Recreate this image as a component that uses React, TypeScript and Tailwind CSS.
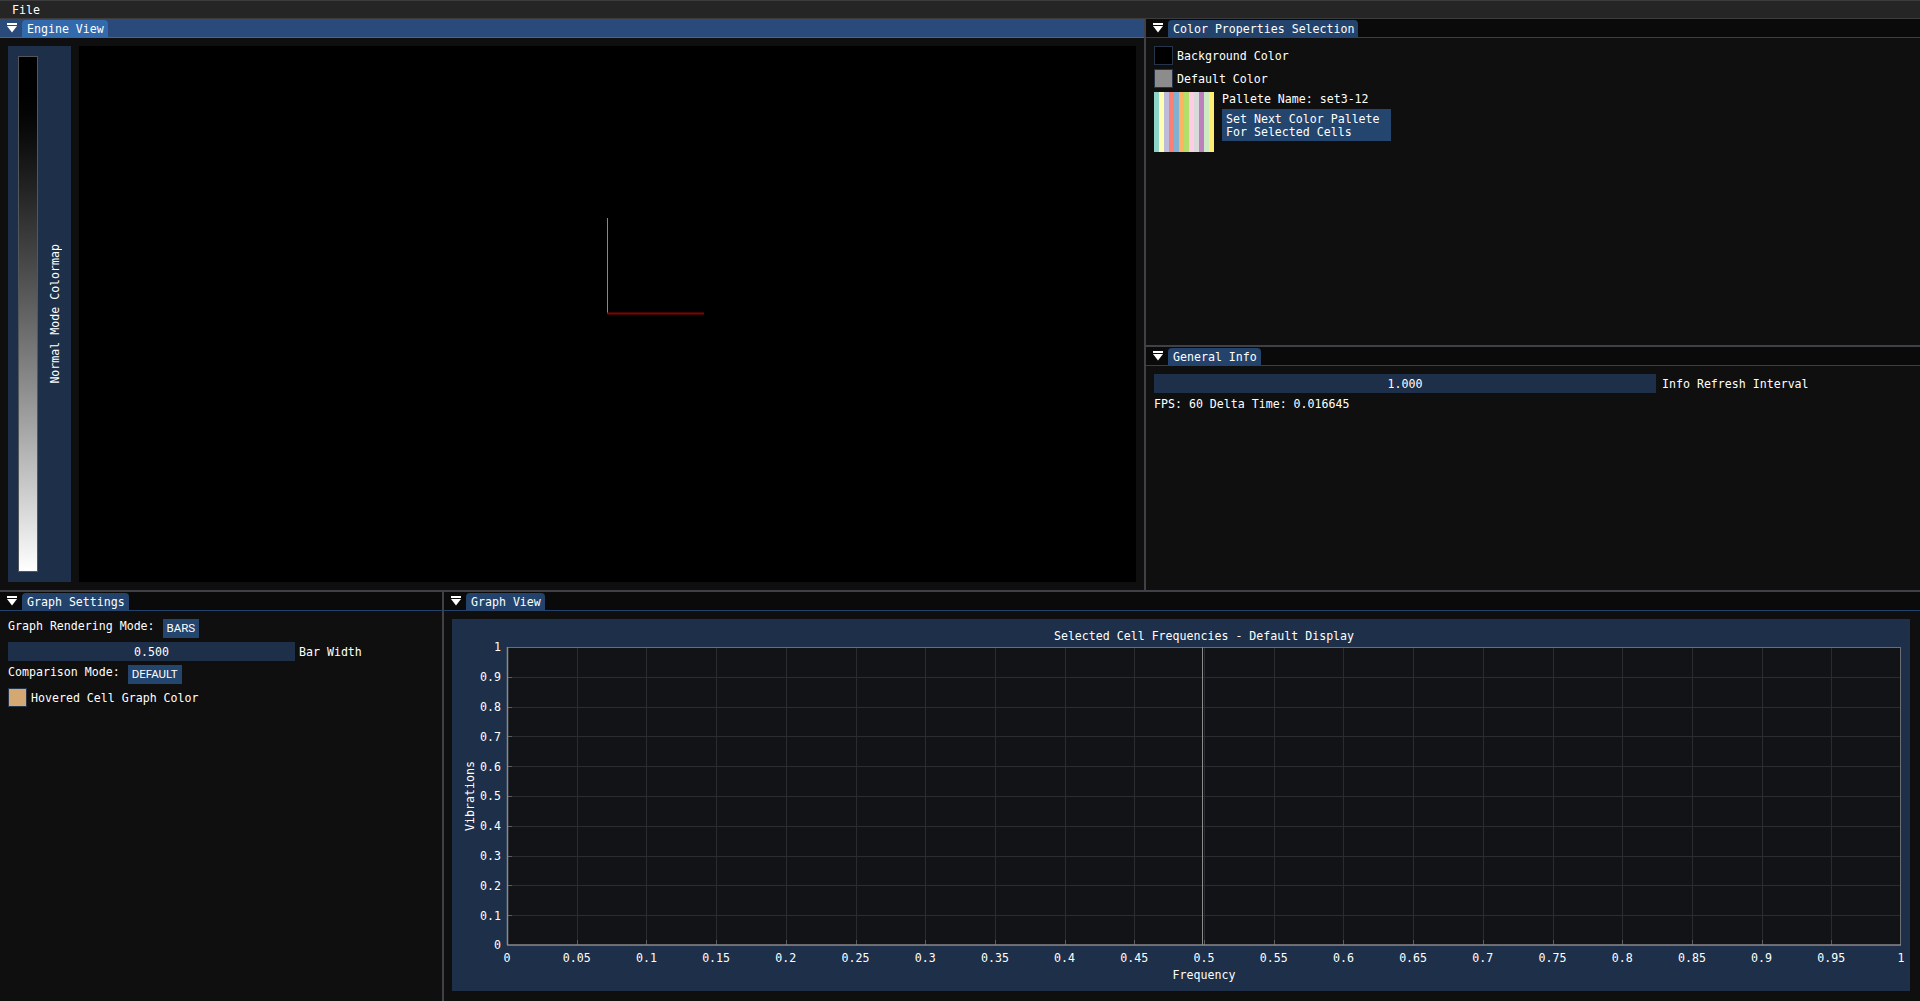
import React from "react";

const Tri = () => (
  <svg width="10" height="10" viewBox="0 0 10 10" className="shrink-0">
    <rect x="0" y="0" width="10" height="2" fill="#ffffff" />
    <polygon points="0,3 10,3 5,9.5" fill="#ffffff" />
  </svg>
);

function TabBar({ title, focused }: { title: string; focused?: boolean }) {
  return (
    <div
      className={
        focused
          ? "h-[19px] shrink-0 flex items-end bg-[#294a7a] border-b border-[#3369ad]"
          : "h-[19px] shrink-0 flex items-end bg-[#0a0a0a] border-b border-[#23436c]"
      }
    >
      <div className="w-[22px] h-[18px] flex items-center pl-[7px]">
        <Tri />
      </div>
      <div
        className={
          focused
            ? "h-[17px] pl-[5px] pr-[4px] rounded-t-[4px] flex items-center bg-[#3369ad] whitespace-pre"
            : "h-[17px] pl-[5px] pr-[4px] rounded-t-[4px] flex items-center bg-[#23436c] whitespace-pre"
        }
      >
        <span className="relative top-[1px]">{title}</span>
      </div>
    </div>
  );
}

const Divider = ({ vertical }: { vertical?: boolean }) =>
  vertical ? (
    <div className="w-[2px] shrink-0 bg-[#404047]" />
  ) : (
    <div className="h-[2px] shrink-0 bg-[#404047]" />
  );

const Swatch = ({ color }: { color: string }) => (
  <div className="w-[19px] h-[19px] shrink-0 border border-[#26344a]" style={{ background: color }} />
);

const T = ({ children, className }: { children: React.ReactNode; className?: string }) => (
  <span className={"relative top-[1px] whitespace-pre " + (className ?? "")}>{children}</span>
);

const PALETTE = [
  "#8dd3c7",
  "#ffffb3",
  "#bebada",
  "#fb8072",
  "#80b1d3",
  "#fdb462",
  "#b3de69",
  "#fccde5",
  "#d9d9d9",
  "#bc80bd",
  "#ccebc5",
  "#ffed6f",
];

function EngineView() {
  return (
    <div className="w-[1144px] shrink-0 flex flex-col">
      <TabBar title="Engine View" focused />
      <div className="flex-1 flex gap-[8px] p-[8px]">
        <div className="w-[63px] shrink-0 bg-[#1d2f49] flex items-center pl-[10px] py-[10px]">
          <div className="w-[20px] self-stretch bg-linear-to-b from-[#000000] to-[#ffffff] border border-[#55555c]" />
          <div className="ml-[11px] [writing-mode:vertical-rl] rotate-180 leading-[13px] whitespace-pre">
            Normal Mode Colormap
          </div>
        </div>
        <div className="flex-1 bg-black relative">
          <svg className="absolute inset-0" width="1057" height="536">
            <line x1="528.5" y1="172" x2="528.5" y2="267" stroke="#22d022" strokeWidth="1" />
            <line x1="528" y1="267.5" x2="625" y2="267.5" stroke="#8a0000" strokeWidth="2" />
          </svg>
        </div>
      </div>
    </div>
  );
}

function ColorProps() {
  return (
    <div className="h-[326px] shrink-0 flex flex-col">
      <TabBar title="Color Properties Selection" />
      <div className="flex flex-col gap-[4px] p-[8px]">
        <div className="flex items-center h-[19px] gap-[4px]">
          <Swatch color="#000000" />
          <T>Background Color</T>
        </div>
        <div className="flex items-center h-[19px] gap-[4px]">
          <Swatch color="#8c8c8c" />
          <T>Default Color</T>
        </div>
        <div className="flex gap-[8px]">
          <div className="w-[60px] h-[60px] flex shrink-0">
            {PALETTE.map((c) => (
              <div key={c} className="w-[5px] h-full" style={{ background: c }} />
            ))}
          </div>
          <div className="flex flex-col gap-[4px] items-start">
            <div className="h-[13px]">
              <T>Pallete Name: set3-12</T>
            </div>
            <div className="bg-[#24456d] pl-[4px] pr-[11px] py-[3px] leading-[13px]">
              <div className="relative top-[1px]">Set Next Color Pallete</div>
              <div className="relative top-[1px]">For Selected Cells</div>
            </div>
          </div>
        </div>
      </div>
    </div>
  );
}

function GeneralInfo() {
  return (
    <div className="flex-1 flex flex-col">
      <TabBar title="General Info" />
      <div className="flex flex-col gap-[4px] p-[8px]">
        <div className="flex items-center h-[19px]">
          <div className="w-[502px] h-[19px] bg-[#1d2f49] flex items-center justify-center">
            <T>1.000</T>
          </div>
          <T className="ml-[6px]">Info Refresh Interval</T>
        </div>
        <div className="h-[13px]">
          <T>FPS: 60 Delta Time: 0.016645</T>
        </div>
      </div>
    </div>
  );
}

function GraphSettings() {
  return (
    <div className="w-[442px] shrink-0 flex flex-col">
      <TabBar title="Graph Settings" />
      <div className="flex flex-col gap-[4px] p-[8px]">
        <div className="flex items-start h-[19px] gap-[8px]">
          <T>Graph Rendering Mode:</T>
          <div className="h-[19px] px-[4px] bg-[#24456d] flex items-center [font-family:Roboto,sans-serif] text-[11.5px]">
            BARS
          </div>
        </div>
        <div className="flex items-center h-[19px]">
          <div className="w-[287px] h-[19px] bg-[#1d2f49] flex items-center justify-center">
            <T>0.500</T>
          </div>
          <T className="ml-[4px]">Bar Width</T>
        </div>
        <div className="flex items-start h-[19px] gap-[8px]">
          <T>Comparison Mode:</T>
          <div className="h-[19px] px-[4px] bg-[#24456d] flex items-center [font-family:Roboto,sans-serif] text-[11.5px]">
            DEFAULT
          </div>
        </div>
        <div className="flex items-center h-[19px] gap-[4px]">
          <Swatch color="#d4a872" />
          <T>Hovered Cell Graph Color</T>
        </div>
      </div>
    </div>
  );
}

function Chart() {
  const W = 1458;
  const H = 372;
  const PL = 55;
  const PT = 28;
  const PW = 1394;
  const PH = 298;
  const xt = Array.from({ length: 21 }, (_, i) => i);
  const yt = Array.from({ length: 11 }, (_, i) => i);
  const fmt = (v: number) => String(parseFloat(v.toFixed(2)));
  const ff = "DejaVu Sans Mono, monospace";
  return (
    <svg width={W} height={H} viewBox={`0 0 ${W} ${H}`}>
      <rect x={PL} y={PT} width={PW} height={PH} fill="#121316" />
      {xt.slice(1, 20).map((i) => {
        const x = Math.round(PL + (i * PW) / 20) + 0.5;
        return <line key={"gx" + i} x1={x} y1={PT} x2={x} y2={PT + PH} stroke="#2b2c30" strokeWidth="1" />;
      })}
      {yt.slice(1, 10).map((i) => {
        const y = Math.round(PT + PH - (i * PH) / 10) + 0.5;
        return <line key={"gy" + i} x1={PL} y1={y} x2={PL + PW} y2={y} stroke="#2b2c30" strokeWidth="1" />;
      })}
      {xt.slice(1, 20).map((i) => {
        const x = Math.round(PL + (i * PW) / 20) + 0.5;
        return <line key={"tx" + i} x1={x} y1={PT + PH - 5} x2={x} y2={PT + PH} stroke="#5c5c60" strokeWidth="1" />;
      })}
      {yt.slice(1, 10).map((i) => {
        const y = Math.round(PT + PH - (i * PH) / 10) + 0.5;
        return <line key={"ty" + i} x1={PL} y1={y} x2={PL + 5} y2={y} stroke="#5c5c60" strokeWidth="1" />;
      })}
      <line x1={PL} y1={PT + 0.5} x2={PL + PW} y2={PT + 0.5} stroke="#6c6c74" strokeWidth="1" />
      <line x1={PL + PW - 0.5} y1={PT} x2={PL + PW - 0.5} y2={PT + PH} stroke="#6c6c74" strokeWidth="1" />
      <line x1={PL + 0.5} y1={PT} x2={PL + 0.5} y2={PT + PH} stroke="#8a8a8e" strokeWidth="1.5" />
      <line x1={PL} y1={PT + PH} x2={PL + PW} y2={PT + PH} stroke="#8a8a8e" strokeWidth="1.5" />
      <line x1={750.5} y1={PT} x2={750.5} y2={PT + PH} stroke="#8c8c8c" strokeWidth="1" />
      <g fill="#ffffff" fontFamily={ff} fontSize="11.6">
        <text x={PL + PW / 2} y={20.5} textAnchor="middle">
          Selected Cell Frequencies - Default Display
        </text>
        {yt.map((i) => (
          <text key={"ly" + i} x={PL - 6} y={PT + PH - (i * PH) / 10 + 4.3} textAnchor="end">
            {fmt(i * 0.1)}
          </text>
        ))}
        {xt.map((i) => (
          <text key={"lx" + i} x={PL + (i * PW) / 20} y={PT + PH + 16.8} textAnchor="middle">
            {fmt(i * 0.05)}
          </text>
        ))}
        <text x={PL + PW / 2} y={359.5} textAnchor="middle">
          Frequency
        </text>
        <text transform={`translate(21.5 ${PT + PH / 2}) rotate(-90)`} textAnchor="middle">
          Vibrations
        </text>
      </g>
    </svg>
  );
}

function GraphView() {
  return (
    <div className="flex-1 flex flex-col">
      <TabBar title="Graph View" />
      <div className="pt-[8px] pl-[8px]">
        <div className="w-[1458px] h-[372px] bg-[#1d2f49]">
          <Chart />
        </div>
      </div>
    </div>
  );
}

export default function App() {
  return (
    <div className="w-[1920px] h-[1001px] overflow-hidden flex flex-col bg-[#0f0f0f] text-white [font-family:'DejaVu_Sans_Mono',monospace] text-[11.6px] leading-[13px]">
      <div className="h-[19px] shrink-0 bg-[#252525] border-t border-b border-[#3c3c3c] flex items-center pl-[12px]">
        <T>File</T>
      </div>
      <div className="h-[571px] shrink-0 flex">
        <EngineView />
        <Divider vertical />
        <div className="flex-1 flex flex-col">
          <ColorProps />
          <Divider />
          <GeneralInfo />
        </div>
      </div>
      <Divider />
      <div className="flex-1 flex min-h-0">
        <GraphSettings />
        <Divider vertical />
        <GraphView />
      </div>
    </div>
  );
}
